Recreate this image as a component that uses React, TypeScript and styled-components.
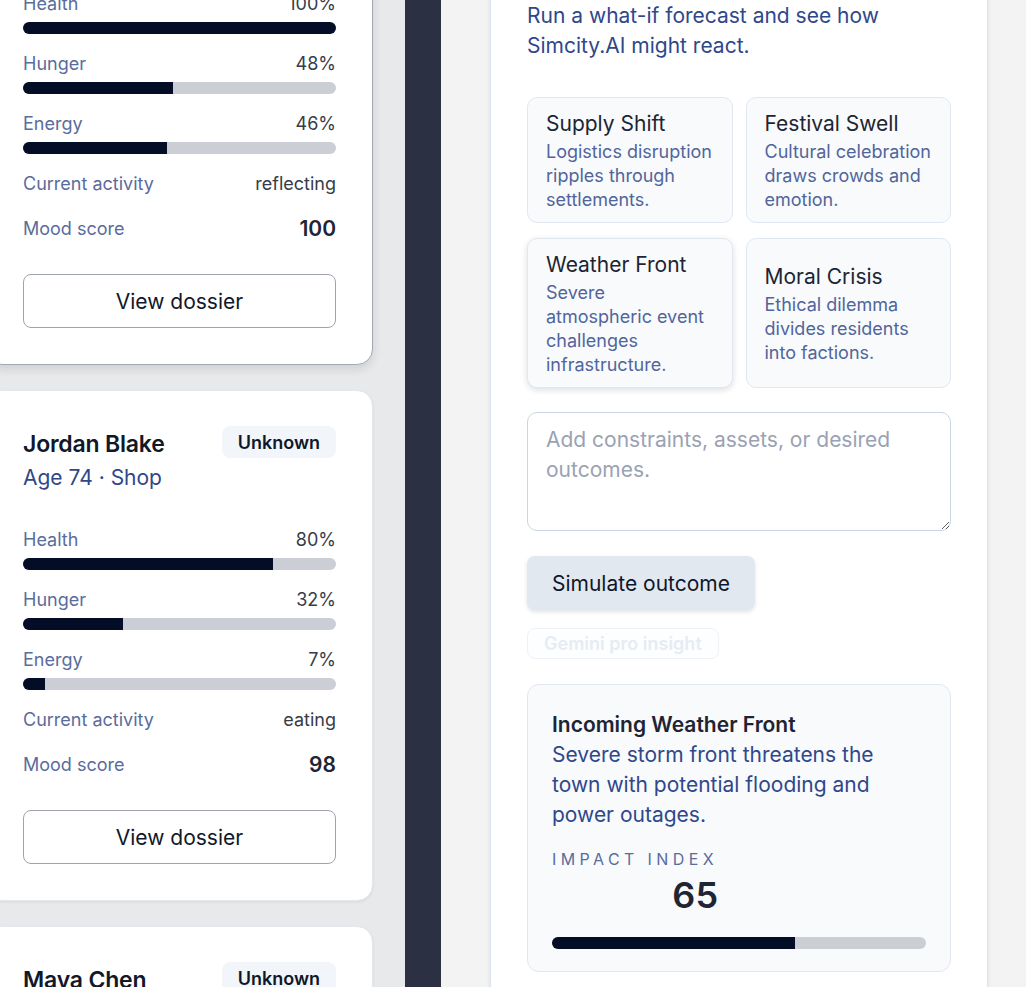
import React from 'react'
import styled, { createGlobalStyle } from 'styled-components'

type Stat = { label: string; value: number }

type Resident = {
  name: string
  age: number
  place: string
  status: string
  stats: Stat[]
  activity: string
  mood: number
  selected?: boolean
}

const residents: Resident[] = [
  {
    name: 'Ava Romero',
    age: 31,
    place: 'Library',
    status: 'Unknown',
    stats: [
      { label: 'Health', value: 100 },
      { label: 'Hunger', value: 48 },
      { label: 'Energy', value: 46 },
    ],
    activity: 'reflecting',
    mood: 100,
    selected: true,
  },
  {
    name: 'Jordan Blake',
    age: 74,
    place: 'Shop',
    status: 'Unknown',
    stats: [
      { label: 'Health', value: 80 },
      { label: 'Hunger', value: 32 },
      { label: 'Energy', value: 7 },
    ],
    activity: 'eating',
    mood: 98,
  },
  {
    name: 'Maya Chen',
    age: 29,
    place: 'Cafe',
    status: 'Unknown',
    stats: [
      { label: 'Health', value: 92 },
      { label: 'Hunger', value: 40 },
      { label: 'Energy', value: 61 },
    ],
    activity: 'working',
    mood: 87,
  },
]

const scenarios = [
  { title: 'Supply Shift', text: 'Logistics disruption ripples through settlements.' },
  { title: 'Festival Swell', text: 'Cultural celebration draws crowds and emotion.' },
  { title: 'Weather Front', text: 'Severe atmospheric event challenges infrastructure.', active: true },
  { title: 'Moral Crisis', text: 'Ethical dilemma divides residents into factions.' },
]

const ResidentCard = ( { resident }: { resident: Resident } ) => (
  <Card $selected={resident.selected}>
    <CardHeader>
      <div>
        <Name>{resident.name}</Name>
        <Meta>Age {resident.age} · {resident.place}</Meta>
      </div>
      <Badge>{resident.status}</Badge>
    </CardHeader>
    <StatList>
      {resident.stats.map( stat => (
        <div key={stat.label}>
          <InfoRow>
            <InfoLabel>{stat.label}</InfoLabel>
            <InfoValue>{stat.value}%</InfoValue>
          </InfoRow>
          <Track>
            <Fill style={{ width: `${stat.value}%` }}/>
          </Track>
        </div>
      ) )}
      <InfoRow>
        <InfoLabel>Current activity</InfoLabel>
        <InfoValue>{resident.activity}</InfoValue>
      </InfoRow>
      <InfoRow>
        <InfoLabel>Mood score</InfoLabel>
        <MoodValue>{resident.mood}</MoodValue>
      </InfoRow>
    </StatList>
    <OutlineButton>View dossier</OutlineButton>
  </Card>
)

const App = () => (
  <>
    <GlobalStyle/>
    <Layout>
      <Sidebar>
        <CardList>
          {residents.map( r => <ResidentCard key={r.name} resident={r}/> )}
        </CardList>
      </Sidebar>
      <Divider/>
      <Main>
        <Panel>
          <PanelTitle>Scenario lab</PanelTitle>
          <Lead>Run a what-if forecast and see how Simcity.AI might react.</Lead>
          <ScenarioGrid>
            {scenarios.map( s => (
              <ScenarioCard key={s.title} $active={s.active}>
                <ScenarioTitle>{s.title}</ScenarioTitle>
                <ScenarioText>{s.text}</ScenarioText>
              </ScenarioCard>
            ) )}
          </ScenarioGrid>
          <Notes placeholder='Add constraints, assets, or desired outcomes.'/>
          <SimulateButton>Simulate outcome</SimulateButton>
          <GhostTag>Gemini pro insight</GhostTag>
          <Insight>
            <InsightTitle>Incoming Weather Front</InsightTitle>
            <InsightText>
              Severe storm front threatens the town with potential flooding and power outages.
            </InsightText>
            <Impact>
              <ImpactLabel>Impact index</ImpactLabel>
              <ImpactValue>65</ImpactValue>
            </Impact>
            <ImpactTrack>
              <Fill style={{ width: '65%' }}/>
            </ImpactTrack>
          </Insight>
        </Panel>
      </Main>
    </Layout>
  </>
)

const GlobalStyle = createGlobalStyle`
  html, body { margin: 0; padding: 0; }
  body {
    font-family: Inter, "Noto Sans", sans-serif;
    color: #0f172a;
    overflow: hidden;
  }
  * { box-sizing: border-box; }
`

const Layout = styled.div`
  display: flex;
  height: 100vh;
  overflow: hidden;
`

const Sidebar = styled.aside`
  width: 405px;
  flex-shrink: 0;
  background: #e8e9eb;
  overflow: hidden;
`

const CardList = styled.div`
  display: flex;
  flex-direction: column;
  gap: 25px;
  width: 387px;
  margin: -146px 0 0 -14px;
`

const Card = styled.div<{ $selected?: boolean }>`
  background: #ffffff;
  border-radius: 16px;
  padding: 36px;
  border: 1px solid ${p => p.$selected ? '#a4a8b0' : '#e3e8ef'};
  box-shadow: ${p => p.$selected
    ? '0 4px 10px rgba(15, 23, 42, 0.12)'
    : '0 1px 3px rgba(15, 23, 42, 0.08)'};
`

const CardHeader = styled.div`
  display: flex;
  justify-content: space-between;
  align-items: flex-start;
  margin: -1px 0 34px;
`

const Name = styled.div`
  font-size: 23px;
  line-height: 36px;
  font-weight: 600;
  color: #111827;
  letter-spacing: -0.2px;
`

const Meta = styled.div`
  font-size: 21px;
  line-height: 32px;
  color: #30478a;
`

const Badge = styled.span`
  display: inline-flex;
  align-items: center;
  height: 32px;
  padding: 0 16px;
  border-radius: 8px;
  background: #f2f5f9;
  font-size: 18px;
  font-weight: 600;
  color: #0f172a;
`

const StatList = styled.div`
  display: flex;
  flex-direction: column;
  gap: 18px;
`

const InfoRow = styled.div`
  display: flex;
  justify-content: space-between;
  align-items: center;
  line-height: 24px;
`

const InfoLabel = styled.span`
  font-size: 18px;
  color: #5a6c9c;
`

const InfoValue = styled.span`
  font-size: 18px;
  color: #363c48;
`

const MoodValue = styled.span`
  font-size: 21px;
  line-height: 30px;
  font-weight: 600;
  color: #1f2533;
`

const Track = styled.div`
  height: 12px;
  margin-top: 6px;
  border-radius: 6px;
  background: #cbced4;
  overflow: hidden;
`

const Fill = styled.div`
  height: 100%;
  background: #030d26;
`

const OutlineButton = styled.button`
  display: block;
  width: 100%;
  height: 54px;
  margin-top: 30px;
  border: 1px solid #9ea3ad;
  border-radius: 8px;
  background: #ffffff;
  font-family: inherit;
  font-size: 21px;
  color: #111827;
`

const Divider = styled.div`
  width: 36px;
  flex-shrink: 0;
  background: #2b3143;
`

const Main = styled.main`
  flex: 1;
  background: #f3f3f3;
  padding-left: 49px;
  overflow: hidden;
`

const Panel = styled.section`
  width: 498px;
  margin-top: -75px;
  padding: 36px;
  background: #ffffff;
  border: 1px solid #dbe3ee;
  border-radius: 16px;
  box-shadow: 0 1px 4px rgba(15, 23, 42, 0.08);
  display: flex;
  flex-direction: column;
  align-items: flex-start;
`

const PanelTitle = styled.h2`
  margin: 0 0 8px;
  font-size: 24px;
  line-height: 31px;
  font-weight: 600;
`

const Lead = styled.p`
  margin: 0;
  font-size: 21px;
  line-height: 30px;
  color: #30478a;
`

const ScenarioGrid = styled.div`
  display: grid;
  grid-template-columns: 1fr 1fr;
  column-gap: 13px;
  row-gap: 15px;
  width: 100%;
  margin-top: 36px;
`

const ScenarioCard = styled.div<{ $active?: boolean }>`
  display: flex;
  flex-direction: column;
  justify-content: center;
  padding: 12px 18px 10px;
  border: 1px solid #e1e7f0;
  border-radius: 10px;
  background: #f8fafc;
  box-shadow: ${p => p.$active ? '0 2px 6px rgba(15, 23, 42, 0.14)' : 'none'};
`

const ScenarioTitle = styled.div`
  font-size: 21px;
  line-height: 28px;
  color: #1e2432;
  margin-bottom: 2px;
`

const ScenarioText = styled.div`
  font-size: 18px;
  line-height: 24px;
  color: #51659b;
`

const Notes = styled.textarea`
  width: 100%;
  height: 119px;
  margin-top: 24px;
  padding: 12px 18px;
  border: 1px solid #c9d5e6;
  border-radius: 10px;
  font-family: inherit;
  font-size: 21px;
  line-height: 30px;
  color: #0f172a;
  &::placeholder { color: #9aa2b3; }
`

const SimulateButton = styled.button`
  height: 54px;
  margin-top: 25px;
  padding: 0 25px;
  border: none;
  border-radius: 8px;
  background: #e2e8f0;
  box-shadow: 0 2px 4px rgba(15, 23, 42, 0.12);
  font-family: inherit;
  font-size: 21px;
  color: #0f172a;
`

const GhostTag = styled.span`
  display: inline-flex;
  align-items: center;
  height: 31px;
  margin-top: 18px;
  padding: 0 16px;
  border: 1px solid #eef2f7;
  border-radius: 8px;
  background: #fdfeff;
  font-size: 18px;
  font-weight: 600;
  color: #e6ecf3;
`

const Insight = styled.div`
  width: 100%;
  margin-top: 25px;
  padding: 25px 24px 22px;
  border: 1px solid #e1e7f0;
  border-radius: 12px;
  background: #f8fafc;
`

const InsightTitle = styled.div`
  font-size: 21px;
  line-height: 30px;
  font-weight: 600;
  color: #1e2432;
`

const InsightText = styled.div`
  font-size: 21px;
  line-height: 30px;
  color: #30478a;
  padding-right: 40px;
`

const Impact = styled.div`
  display: inline-flex;
  flex-direction: column;
  align-items: flex-end;
  margin-top: 17px;
`

const ImpactLabel = styled.div`
  font-size: 16px;
  line-height: 24px;
  letter-spacing: 4.4px;
  text-transform: uppercase;
  color: #5a6c9c;
`

const ImpactValue = styled.div`
  font-size: 36px;
  line-height: 40px;
  margin-top: 4px;
  font-weight: 600;
  color: #1f2533;
`

const ImpactTrack = styled( Track )`
  margin-top: 22px;
`

export default App
